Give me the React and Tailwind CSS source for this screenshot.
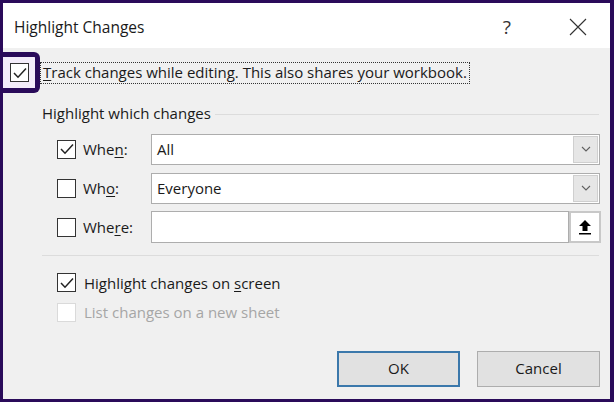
import React from 'react';

const font = { fontFamily: '"Segoe UI", "Open Sans", "Noto Sans", sans-serif' };

const Check = () => (
  <svg width="16" height="16" viewBox="0 0 16 16" fill="none">
    <path d="M2 8 L6 12.2 L14 3.5" stroke="#222" strokeWidth="1.5" />
  </svg>
);

const Box = ({ checked, disabled }) => (
  <div
    className={`w-[19px] h-[19px] flex items-center justify-center bg-white border ${
      disabled ? 'border-[#dadada]' : 'border-[#333]'
    }`}
  >
    {checked && <Check />}
  </div>
);

const Chevron = () => (
  <svg width="10" height="6" viewBox="0 0 10 6" fill="none">
    <path d="M1 1 L5 5 L9 1" stroke="#606060" strokeWidth="1.1" />
  </svg>
);

const Combo = ({ value }) => (
  <div className="w-[449px] h-[31px] flex items-center bg-white border border-[#adadad]">
    <span className="flex-1 pl-[5px] text-[15px] text-[#1a1a1a]">{value}</span>
    <div className="w-[25px] h-[27px] mr-[1px] flex items-center justify-center bg-[#e6e6e6] border border-[#cfcfcf]">
      <Chevron />
    </div>
  </div>
);

const Row = ({ label, u, rest, checked, children }) => (
  <div className="flex items-center h-[31px]">
    <div className="w-[26px]">
      <Box checked={checked} />
    </div>
    <span className="w-[68px] text-[15px] text-[#1a1a1a]">
      {label}
      <span className="underline underline-offset-2">{u}</span>
      {rest}
    </span>
    {children}
  </div>
);

export default function App() {
  return (
    <div
      style={font}
      className="w-[614px] h-[402px] border-l-[3px] border-t-[3px] border-r-[4px] border-b-[3px] border-[#2a0b5a] bg-[#f0f0f0] flex flex-col overflow-hidden"
    >
      {/* title bar */}
      <div className="h-[45px] bg-white flex items-center pl-[11px] pt-[3px]">
        <span className="flex-1 text-[15.5px] text-[#1a1a1a] pt-[2px]">Highlight Changes</span>
        <span className="text-[19px] text-[#333] mr-[58px]">?</span>
        <svg width="18" height="18" viewBox="0 0 18 18" className="mr-[23px]">
          <path d="M1 1 L17 17 M17 1 L1 17" stroke="#333" strokeWidth="1.1" />
        </svg>
      </div>

      {/* track changes */}
      <div className="flex items-center mt-[4px]">
        <div className="w-[37px] h-[41px] border-[5px] border-l-0 border-[#2a0b5a] rounded-r-[6px] bg-[#f3ecfa] flex items-center justify-center pl-[1px]">
          <Box checked />
        </div>
        <div className="px-[2px] h-[22px] flex items-center border border-dotted border-[#333] text-[15px] text-[#1a1a1a]">
          <span className="underline underline-offset-2">T</span>rack changes while editing. This also shares your workbook.
        </div>
      </div>

      {/* group */}
      <div className="flex items-center mt-[9px] pl-[39px] pr-[11px]">
        <span className="text-[15px] text-[#1a1a1a]">Highlight which changes</span>
        <div className="flex-1 h-px bg-[#dcdcdc] ml-[4px] mt-[2px]" />
      </div>

      <div className="flex flex-col gap-[8px] pl-[54px] mt-[9px]">
        <Row label="Whe" u="n" rest=":" checked>
          <Combo value="All" />
        </Row>
        <Row label="Wh" u="o" rest=":">
          <Combo value="Everyone" />
        </Row>
        <Row label="Whe" u="r" rest="e:">
          <div className="flex h-[32px]">
            <div className="w-[418px] bg-white border border-[#adadad]" />
            <div className="w-[32px] h-[32px] flex items-center justify-center bg-white border-[2px] border-[#c8c8c8]">
              <svg width="14" height="16" viewBox="0 0 14 16">
                <path d="M7 1 L13 7 L9.5 7 L9.5 12 L4.5 12 L4.5 7 L1 7 Z" fill="#000" />
                <rect x="1" y="14" width="12" height="1.5" fill="#000" />
              </svg>
            </div>
          </div>
        </Row>
      </div>

      <div className="h-px bg-[#dcdcdc] ml-[39px] mr-[11px] mt-[12px]" />

      <div className="flex flex-col gap-[7px] pl-[54px] mt-[16px]">
        <div className="flex items-center">
          <Box checked />
          <span className="ml-[8px] text-[15px] text-[#1a1a1a]">
            Highlight changes on <span className="underline underline-offset-2">s</span>creen
          </span>
        </div>
        <div className="flex items-center">
          <Box disabled />
          <span className="ml-[8px] text-[15px] text-[#a6a6a6]">List changes on a new sheet</span>
        </div>
      </div>

      <div className="flex justify-end gap-[17px] pr-[10px] mt-[27px]">
        <div className="w-[123px] h-[36px] flex items-center justify-center bg-[#e1e1e1] border-[2px] border-[#3b78ab] text-[15px] text-[#1a1a1a]">
          OK
        </div>
        <div className="w-[123px] h-[36px] flex items-center justify-center bg-[#e1e1e1] border border-[#adadad] text-[15px] text-[#1a1a1a]">
          Cancel
        </div>
      </div>
    </div>
  );
}
